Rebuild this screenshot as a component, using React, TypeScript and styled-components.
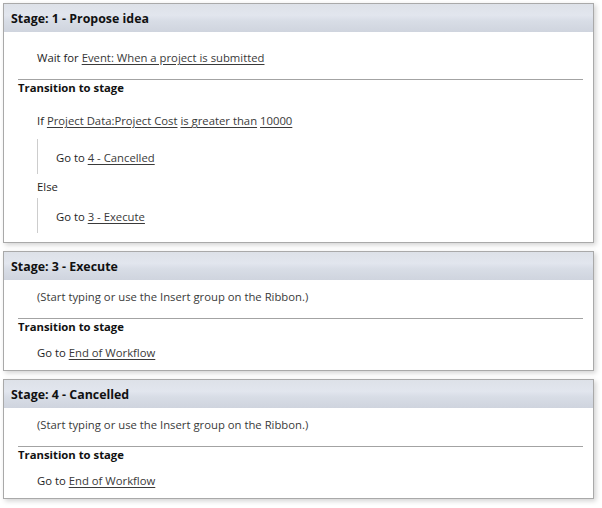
import React from "react";
import styled, { createGlobalStyle } from "styled-components";

const Global = createGlobalStyle`
  html, body { margin: 0; padding: 0; background: #ffffff; }
  body { font-family: "Open Sans", "Noto Sans", sans-serif; color: #1e1e1e; }
`;

const Page = styled.div`
  display: flex;
  flex-direction: column;
  gap: 8px;
  padding: 3px 8px 8px 3px;
`;

const Card = styled.section`
  border: 1px solid #a9a9a9;
  background: #ffffff;
  box-shadow: 2px 2px 5px rgba(0, 0, 0, 0.18);
`;

const Header = styled.div`
  height: 28px;
  display: flex;
  align-items: center;
  padding-left: 7px;
  font-weight: 700;
  font-size: 12.4px;
  color: #111;
  background: linear-gradient(#dde1e8 0%, #e2e6ee 40%, #d8dde6 60%, #cfd4de 100%);
`;

const Body = styled.div<{ $top: number }>`
  display: flex;
  flex-direction: column;
  padding: ${(p) => p.$top}px 10px 9px 0;
`;

const Line = styled.div<{ $indent?: number; $mt?: number }>`
  height: 16px;
  line-height: 16px;
  font-size: 11.3px;
  white-space: nowrap;
  padding-left: ${(p) => p.$indent ?? 33}px;
  margin-top: ${(p) => p.$mt ?? 0}px;
`;

const Muted = styled.span`
  color: #3a3a3a;
`;

const Link = styled.a`
  color: #3a3a3a;
  text-decoration: underline;
  text-underline-offset: 2px;
  cursor: pointer;
`;

const Separator = styled.hr<{ $mt: number }>`
  border: 0;
  border-top: 1px solid #a3a3a3;
  margin: ${(p) => p.$mt}px 0 0 14px;
  height: 0;
`;

const SectionTitle = styled.div`
  height: 16px;
  line-height: 16px;
  font-size: 11.3px;
  font-weight: 700;
  padding-left: 14px;
  color: #111;
`;

const Branch = styled.div<{ $mt: number }>`
  margin: ${(p) => p.$mt}px 0 0 33px;
  border-left: 1px solid #cdcdcd;
  padding: 11px 0 8px 18px;
`;

const BranchLine = styled.div`
  height: 16px;
  line-height: 16px;
  font-size: 11.3px;
  white-space: nowrap;
`;

export default function App() {
  return (
    <>
      <Global />
      <Page>
        <Card>
          <Header>Stage: 1 - Propose idea</Header>
          <Body $top={18}>
            <Line>
              Wait for <Link>Event: When a project is submitted</Link>
            </Line>
            <Separator $mt={13} />
            <SectionTitle>Transition to stage</SectionTitle>
            <Line $mt={17}>
              If <Link>Project Data:Project Cost</Link> <Link>is greater than</Link>{" "}
              <Link>10000</Link>
            </Line>
            <Branch $mt={10}>
              <BranchLine>
                Go to <Link>4 - Cancelled</Link>
              </BranchLine>
            </Branch>
            <Line $mt={5}>Else</Line>
            <Branch $mt={3}>
              <BranchLine>
                Go to <Link>3 - Execute</Link>
              </BranchLine>
            </Branch>
          </Body>
        </Card>
        <Card>
          <Header>Stage: 3 - Execute</Header>
          <Body $top={9}>
            <Line>
              <Muted>(Start typing or use the Insert group on the Ribbon.)</Muted>
            </Line>
            <Separator $mt={13} />
            <SectionTitle>Transition to stage</SectionTitle>
            <Line $mt={10}>
              Go to <Link>End of Workflow</Link>
            </Line>
          </Body>
        </Card>
        <Card>
          <Header>Stage: 4 - Cancelled</Header>
          <Body $top={9}>
            <Line>
              <Muted>(Start typing or use the Insert group on the Ribbon.)</Muted>
            </Line>
            <Separator $mt={13} />
            <SectionTitle>Transition to stage</SectionTitle>
            <Line $mt={10}>
              Go to <Link>End of Workflow</Link>
            </Line>
          </Body>
        </Card>
      </Page>
    </>
  );
}
